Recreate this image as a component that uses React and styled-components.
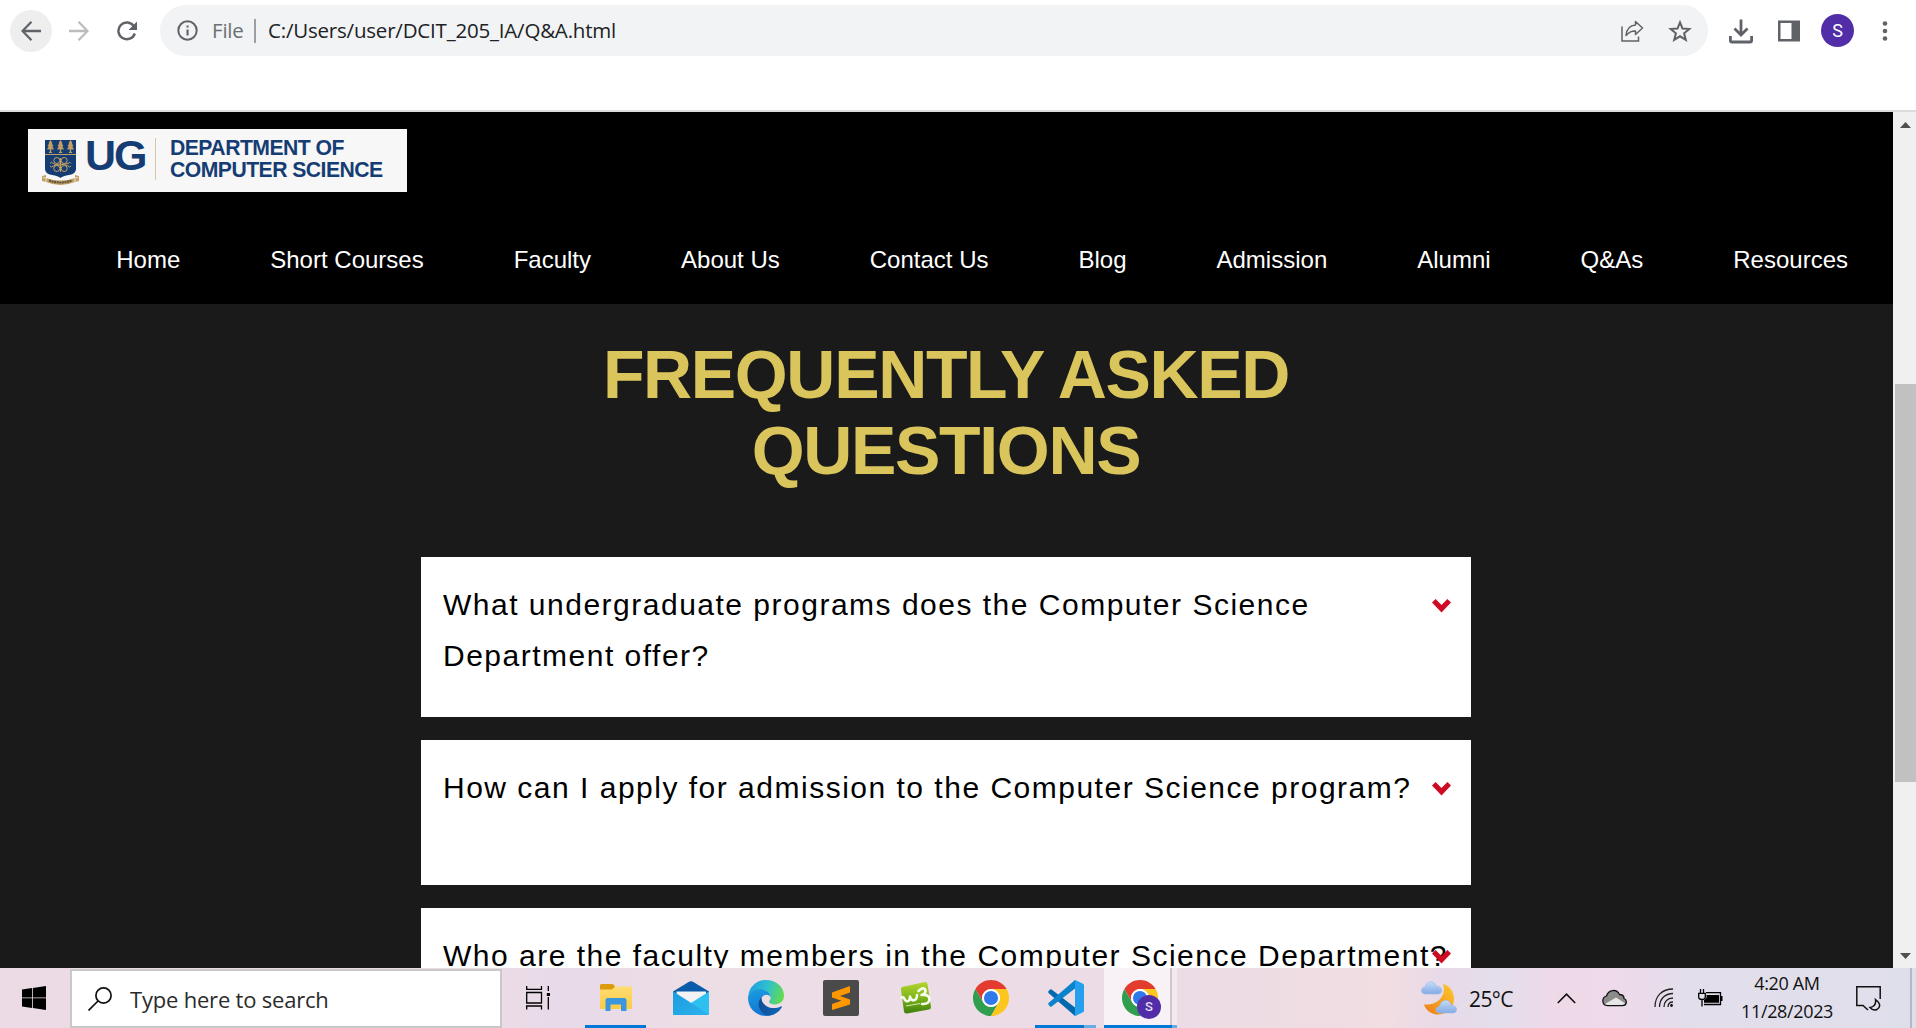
import React from 'react';
import styled, { createGlobalStyle } from 'styled-components';

const Global = createGlobalStyle`
  * { box-sizing: border-box; }
  html, body { margin: 0; padding: 0; overflow: hidden; background: #fff; }
  svg { display: block; flex: none; }
`;

const ui = `"Open Sans", "Noto Sans", sans-serif`;
const arial = `"Liberation Sans", Arial, sans-serif`;

const Screen = styled.div`
  width: 1916px;
  height: 1028px;
  display: flex;
  flex-direction: column;
  overflow: hidden;
`;

/* Browser toolbar */
const Toolbar = styled.header`
  height: 112px;
  flex: none;
  display: flex;
  align-items: flex-start;
  padding: 5px 0 0 10px;
  background: #fff;
  border-bottom: 2px solid #dcdcdc;
`;
const NavButton = styled.div`
  width: 42px;
  height: 42px;
  flex: none;
  margin: 5px ${p => p.$gap}px 0 0;
  border-radius: 50%;
  display: flex;
  align-items: center;
  justify-content: center;
  background: ${p => (p.$active ? '#eeeeee' : 'transparent')};
`;
const AddressBar = styled.div`
  width: 1548px;
  height: 51px;
  flex: none;
  border-radius: 26px;
  background: #f1f3f4;
  display: flex;
  align-items: center;
  padding: 0 16px 0 17px;
  margin-right: 20px;
`;
const Scheme = styled.span`
  font: 20.5px/28px ${ui};
  letter-spacing: -0.2px;
  color: #6b6f73;
  width: 42px;
  margin: -2px 0 0 14px;
  white-space: nowrap;
`;
const Separator = styled.span`
  width: 2px;
  height: 24px;
  background: #9b9fa3;
`;
const Address = styled.span`
  flex: 1;
  margin: -2px 0 0 12px;
  font: 20.5px/28px ${ui};
  letter-spacing: -0.2px;
  color: #202124;
  white-space: nowrap;
`;
const BarIcons = styled.div`
  display: flex;
  align-items: center;
  gap: 24px;
`;
const Tools = styled.div`
  height: 51px;
  display: flex;
  align-items: center;
`;
const Slot = styled.div`
  width: ${p => p.$w}px;
  flex: none;
  display: flex;
  justify-content: center;
`;
const Avatar = styled.div`
  width: 33px;
  height: 33px;
  flex: none;
  border-radius: 50%;
  background: #512da8;
  color: #fff;
  font: 18px/33px Roboto, sans-serif;
  text-align: center;
`;

/* Page */
const Viewport = styled.div`
  height: 856px;
  flex: none;
  display: flex;
  overflow: hidden;
`;
const Page = styled.div`
  width: 1893px;
  height: 856px;
  overflow: hidden;
  background: #1a1a1a;
`;
const SiteHeader = styled.div`
  height: 192px;
  background: #000;
  padding: 17px 0 0 28px;
`;
const Logo = styled.div`
  width: 379px;
  height: 63px;
  background: #f7f7f7;
  display: flex;
  align-items: flex-start;
  padding: 9px 0 0 13px;
  color: #163d73;
  font-family: ${arial};
  font-weight: bold;
`;
const LogoMark = styled.span`
  font-size: 43px;
  line-height: 46px;
  letter-spacing: -2px;
  width: 70px;
  margin: -6px 0 0 4px;
`;
const LogoRule = styled.span`
  width: 1px;
  height: 42px;
  background: #d9c6a5;
`;
const LogoName = styled.div`
  margin: -1px 0 0 14px;
  font-size: 21.2px;
  line-height: 22px;
  letter-spacing: -0.54px;
  white-space: nowrap;
`;
const Menu = styled.nav`
  display: flex;
  justify-content: flex-end;
  gap: 90px;
  padding: 54px 45px 0 0;
`;
const MenuLink = styled.a`
  color: #fff;
  font: 24px/28px ${arial};
  white-space: nowrap;
`;
const Faq = styled.main`
  width: 1050px;
  margin-left: 421px;
  padding-top: 32px;
  display: flex;
  flex-direction: column;
`;
const Title = styled.h1`
  width: 750px;
  height: 221px;
  margin: 0 auto;
  color: #d9c55c;
  font: bold 68px/76px ${arial};
  letter-spacing: -1.35px;
  text-align: center;
`;
const Card = styled.section`
  position: relative;
  height: ${p => p.$h}px;
  flex: none;
  margin-bottom: 23px;
  padding: 22px 20px 0 22px;
  background: #fff;
`;
const Question = styled.p`
  margin: 0;
  color: #000;
  font: 30px/51px ${arial};
  letter-spacing: 1.5px;
`;
const Toggle = styled.svg`
  position: absolute;
  right: 20px;
  top: 42px;
`;

const Scrollbar = styled.div`
  width: 23px;
  height: 856px;
  background: #f0f0f0;
  display: flex;
  flex-direction: column;
  align-items: center;
  padding: 10px 0 9px 2px;
`;
const Thumb = styled.div`
  width: 21px;
  height: 398px;
  flex: none;
  margin: 256px 0 auto;
  background: #c1c1c1;
`;

/* Taskbar */
const Taskbar = styled.footer`
  height: 60px;
  flex: none;
  display: flex;
  color: #111;
  background: linear-gradient(90deg, #ecdbe4 0, #ecdce5 480px, #e7dae9 570px, #eddde5 680px, #ecdce6 1000px,
    #ecdce5 1180px, #f1dde2 1390px, #e8dae8 1440px, #e4deeb 1500px, #efd9e9 1560px, #eddaea 1620px, #e3deeb 1690px, #dfdfeb 1916px);
`;
const Start = styled.div`
  width: 70px;
  flex: none;
  padding: 18px 0 0 22px;
`;
const Search = styled.div`
  width: 432px;
  height: 59px;
  flex: none;
  margin-top: 1px;
  display: flex;
  align-items: center;
  background: #fff;
  border: 2px solid #c8c8c8;
  padding-left: 16px;
  gap: 18px;
  color: #2b2b2b;
  font: 22px/30px ${ui};
  letter-spacing: -0.2px;
`;
const TaskView = styled.div`
  width: 76px;
  flex: none;
  padding: 18px 0 0 24px;
`;
const AppButton = styled.div`
  position: relative;
  width: 75px;
  height: 60px;
  flex: none;
  display: flex;
  align-items: center;
  justify-content: center;
  ${p => p.$active && `background: linear-gradient(90deg, #f8f1f5 66px, #d3c5ce 66px, #d3c5ce 68px, #f4e9ef 68px);
    width: 73px; margin-left: 1px; padding-right: 1px;`}
`;
const Underline = styled.span`
  position: absolute;
  left: ${p => (p.$full ? 0 : 7)}px;
  bottom: 0;
  height: 3px;
  width: ${p => (p.$full ? 73 : 61)}px;
  background: linear-gradient(90deg, #0078d7 ${p => p.$split}px, #66ade5 ${p => p.$split}px);
`;
const Badge = styled.span`
  position: absolute;
  left: 33px;
  top: 27px;
  width: 24px;
  height: 24px;
  border-radius: 50%;
  background: #512da8;
  color: #e6dcf5;
  font: 500 13px/24px Roboto, sans-serif;
  text-align: center;
`;
const Tray = styled.div`
  flex: 1;
  display: flex;
  align-items: center;
  padding-left: 244px;
`;
const Temp = styled.span`
  width: 84px;
  flex: none;
  margin-left: 12px;
  padding-top: 2px;
  font: 21px/28px ${ui};
  letter-spacing: -0.6px;
`;
const Clock = styled.div`
  width: 92px;
  flex: none;
  margin-bottom: 2px;
  text-align: center;
  font: 18px/28px ${ui};
  letter-spacing: -0.35px;
  white-space: nowrap;
`;
const ShowDesktop = styled.span`
  width: 2px;
  height: 60px;
  margin: 0 4px 0 auto;
  background: #b9b6c6;
`;

const Tree = ({ x }) => (
  <path transform={`translate(${x} 3)`} fill="#c3a062" d="M0-1 2 2 1.3 2.4 3 5 1.8 5.3 3.5 8.5 .7 8.3V11H1.6V12H-1.6V11H-.7V8.3L-3.5 8.5-1.8 5.3-3 5-1.3 2.4-2 2Z" />
);

const Crest = () => (
  <svg width="40" height="47" viewBox="0 0 40 47">
    <path fill="#163d73" d="M4 2H35V31Q35 36 28 37 22 38 19.500 40 17 38 11 37 4 36 4 31Z" />
    <Tree x={9.5} /><Tree x={19.5} /><Tree x={29.5} />
    <path stroke="#c3a062" strokeWidth="1" d="M4 16.500H35" />
    <g fill="none" stroke="#c3a062" strokeWidth="1">
      <circle cx="15.800" cy="22.500" r="3" /><circle cx="23.200" cy="22.500" r="3" />
      <circle cx="15.800" cy="30.500" r="3" /><circle cx="23.200" cy="30.500" r="3" />
      <path d="M9 25.500Q10 23 12.500 25.500T19.500 27 27 25.500Q29 23 30 25.500M9 28Q10 30 12.500 28T19.500 26 27 28Q29 30 30 28M19.500 20V34" />
    </g>
    <path fill="#c3a062" d="M1 38 5 37V40Q19.500 45 34 40V37L38 38V43L34 44Q19.500 50 5 44L1 43Z" />
    <path fill="none" stroke="#f7f7f7" strokeWidth=".8" d="M5 39V44M34 39V44M2 40 4 39.500M35 39.500 37 40" />
    <path fill="none" stroke="#5c5440" strokeWidth="2.200" strokeDasharray="2 .6" d="M8 42.500Q19.500 46.500 31 42.500" />
  </svg>
);

const ChromeLogo = () => (
  <svg width="36" height="36" viewBox="0 0 48 48">
    <path fill="#e33b2e" d="M24 12H44.780A24 24 0 0 0 3.220 12L13.610 30A12 12 0 0 1 24 12Z" />
    <path fill="#2f9e4f" d="M13.610 30 3.220 12A24 24 0 0 0 24 48L34.390 30A12 12 0 0 1 13.610 30Z" />
    <path fill="#fcc61d" d="M34.390 30 24 48A24 24 0 0 0 44.780 12H24A12 12 0 0 1 34.390 30Z" />
    <circle cx="24" cy="24" r="12" fill="#fff" />
    <circle cx="24" cy="24" r="9.400" fill="#3079ea" />
  </svg>
);

const Explorer = () => (
  <svg width="32" height="28" viewBox="0 0 32 28">
    <path fill="#dc9b0c" d="M0 1.500Q0 0 1.500 0H12Q13 0 13.700.8L15.500 3V8H0Z" />
    <linearGradient id="fold" x1="0" y1="0" x2="0" y2="1"><stop stopColor="#ffdc72" /><stop offset="1" stopColor="#fcca45" /></linearGradient>
    <path fill="url(#fold)" d="M0 5.500H12L15 2.500H30.500Q32 2.500 32 4V23.500Q32 25 30.500 25H1.500Q0 25 0 23.500Z" />
    <path fill="#3a96dd" d="M5.500 27V16Q5.500 14 7.500 14H24Q26.500 14 26.500 16V27H21V20.500H10.500V27Z" />
  </svg>
);

const Mail = () => (
  <svg width="36" height="34" viewBox="0 0 36 34">
    <linearGradient id="mailg" x1="0" y1="0" x2="1" y2="1"><stop stopColor="#1b9be0" /><stop offset="1" stopColor="#2cb3ec" /></linearGradient>
    <path fill="#0b5ca8" d="M0 10.500 16.500.5Q18 0 19.500.5L36 10.500V14H0Z" />
    <path fill="#f3f3f3" d="M3.500 10.500H33V22H3.500Z" />
    <path fill="#2fc0f2" d="M0 10.500 18 22 36 10.500V32.500Q36 34 34.500 34H1.500Q0 34 0 32.500Z" />
    <path fill="url(#mailg)" d="M0 10.500 36 33.500 34.500 34H1.500Q0 34 0 32.500Z" />
  </svg>
);

const Edge = () => (
  <svg width="36" height="36" viewBox="0 0 36 36">
    <defs>
      <linearGradient id="e1" x1="0" y1=".3" x2="1" y2=".5"><stop stopColor="#1f9fe0" /><stop offset=".5" stopColor="#2fbfd0" /><stop offset="1" stopColor="#62dc50" /></linearGradient>
      <linearGradient id="e2" x1=".2" y1="0" x2=".5" y2="1"><stop stopColor="#1b9be2" /><stop offset="1" stopColor="#1173ce" /></linearGradient>
      <linearGradient id="e3" x1="0" y1="0" x2="1" y2=".4"><stop stopColor="#0d4a93" /><stop offset="1" stopColor="#1263b4" /></linearGradient>
    </defs>
    <path fill="url(#e1)" d="M.3 15.500C1.500 6.500 9 0 18 0 28.500 0 36 7.500 36 15.500 36 21 32 24.500 27 24.500 23 24.500 21 23 21 21.800 21 21 22.600 20.200 22.600 17.500 22.600 13.500 18.500 10 13 10 7 10 2 12.500.3 15.500Z" />
    <path fill="url(#e2)" d="M.1 16.500C1.800 12 6.500 9.300 12 9.300 18 9.300 22.500 13 22.600 17 20.500 13.800 16.500 14.200 14 17 10.500 21 13 31 24.500 33.500 27.500 34 25 35 18 36 8 36-.8 28 .1 16.500Z" />
    <path fill="url(#e3)" d="M13.800 17.200C10 20 9.500 26 13 31 15.500 34.500 19.500 36 22 35.600 27.500 34.500 31.500 31.500 33.800 27.300 34.200 26.500 33.500 26 32.700 26.500 28 29 21 28.500 17.500 25.500 14.500 23 13 19.800 13.800 17.200Z" />
  </svg>
);

const Sublime = () => (
  <svg width="36" height="36" viewBox="0 0 36 36">
    <rect width="36" height="36" rx="2" fill="#4a4a4a" />
    <path fill="#ff9800" d="M9 12.500 27 6V12.500L17 16 27 19.500V24.500L9 30V24L18.500 20.800 9 17.500Z" />
  </svg>
);

const W3 = () => (
  <svg width="32" height="34" viewBox="0 0 32 34">
    <linearGradient id="w3g" x1="0" y1="0" x2="0" y2="1"><stop stopColor="#b6d531" /><stop offset=".5" stopColor="#7cb518" /><stop offset="1" stopColor="#3f7f10" /></linearGradient>
    <path fill="url(#w3g)" d="M2 6 25 1Q27 .8 27.500 3L31 26Q31 28 29 28.500L7 32.500Q4.500 33 4 30.500L1 9Q.7 6.500 2 6Z" />
    <path fill="none" stroke="#f7faee" strokeWidth="2.600" strokeLinecap="round" strokeLinejoin="round" d="M1.500 17Q3 15 4 17C6 22 10 21 10 15.500 11.500 21.500 17 20 17 14M18.500 10Q24 5 25.500 9.500 26 13 21.500 14 29 13 29.500 18 29 23.500 22 23" />
    <path stroke="#d4e8a9" strokeWidth="1" d="M6 25 20 22.500" />
  </svg>
);

const Code = () => (
  <svg width="36" height="36" viewBox="0 0 36 36">
    <path fill="#0069ad" d="M.5 11.300 2 9.600Q2.800 9 3.600 9.600L27 27.500V36L.5 13Q0 12.200.5 11.300Z" />
    <path fill="#0a82cc" d="M.5 24.700 2 26.400Q2.800 27 3.600 26.400L27 8.500V0L.5 23Q0 23.800.5 24.700Z" />
    <path fill="#24a0ee" d="M26 .2 27.200.1 35 3.700Q36 4.200 36 5.200V30.800Q36 31.800 35 32.300L27.200 35.900 26 35.600Q27 35 27 33.500V2.500Q27 1 26 .2Z" />
  </svg>
);

const Weather = () => (
  <svg width="36" height="34" viewBox="0 0 36 34">
    <defs>
      <linearGradient id="moon" x1="1" y1="0" x2="0" y2="1"><stop stopColor="#ffcb30" /><stop offset="1" stopColor="#ee7a12" /></linearGradient>
      <linearGradient id="cloud" x1="0" y1="0" x2="0" y2="1"><stop stopColor="#c5dcfb" /><stop offset="1" stopColor="#83a9e4" /></linearGradient>
    </defs>
    <path fill="url(#moon)" d="M22 3C30 5 34.500 13 32.500 22 30 31 21 35 13 33 8 31.500 4.500 28 3 23.500 16 25 26 15 22 3Z" />
    <path fill="url(#cloud)" stroke="#9bb9e8" strokeWidth=".6" d="M4.500 13C-1 13-1 6.500 4 6 5-.5 14-1 15.500 5.500 22 5 22.500 13 17 13Z" />
    <path fill="url(#cloud)" stroke="#9bb9e8" strokeWidth=".6" d="M19 32C13.500 32 13.500 26 18.500 25.500 20 17.500 29 17.500 30.500 24.500 37 24 37 32 32 32Z" />
  </svg>
);

const G = '#5f6368';
const links = ['Home', 'Short Courses', 'Faculty', 'About Us', 'Contact Us', 'Blog', 'Admission', 'Alumni', 'Q&As', 'Resources'];
const questions = [
  ['What undergraduate programs does the Computer Science Department offer?', 160],
  ['How can I apply for admission to the Computer Science program?', 145],
  ['Who are the faculty members in the Computer Science Department?', 145],
];

export default function App() {
  return (
    <Screen>
      <Global />
      <Toolbar>
        <NavButton $active $gap={6}>
          <svg width="20" height="20" viewBox="0 0 20 20" fill="none" stroke={G} strokeWidth="2.300"><path d="M20 10H2M10.500.8 1.500 10 10.500 19.200" /></svg>
        </NavButton>
        <NavButton $gap={6}>
          <svg width="20" height="20" viewBox="0 0 20 20" fill="none" stroke="#babcbe" strokeWidth="2.300"><path d="M0 10H18M9.500.8 18.500 10 9.500 19.200" /></svg>
        </NavButton>
        <NavButton $gap={12}>
          <svg width="22" height="20" viewBox="0 0 22 20"><path fill="none" stroke={G} strokeWidth="2.400" d="M17.800 5.200A8.400 8.400 0 1 0 18.800 12.500" /><path fill={G} d="M21 .5V9H12.500Z" /></svg>
        </NavButton>
        <AddressBar>
          <svg width="21" height="21" viewBox="0 0 21 21"><circle cx="10.500" cy="10.500" r="9.200" fill="none" stroke={G} strokeWidth="2" /><path fill={G} d="M9.500 9.500H11.600V15.500H9.500ZM9.500 5.500H11.600V7.600H9.500Z" /></svg>
          <Scheme>File</Scheme>
          <Separator />
          <Address>C:/Users/user/DCIT_205_IA/Q&amp;A.html</Address>
          <BarIcons>
            <svg width="24" height="24" viewBox="0 0 24 24" fill="none" stroke={G} strokeWidth="1.500"><path d="M2 7.500V22H18.500V17.500" /><path strokeLinejoin="round" d="M15.500 2.500 22.500 9 15.500 15.500V12C11 11.800 8.500 13.500 6 16.500 6.500 11 9.500 6.500 15.500 6Z" /></svg>
            <svg width="24" height="24" viewBox="0 0 24 24" fill="none" stroke={G} strokeWidth="2"><path d="M12 3.300 14.500 9.500 21.300 10 16.100 14.300 17.800 20.900 12 17.300 6.200 20.900 7.900 14.300 2.700 10 9.500 9.500Z" /></svg>
          </BarIcons>
        </AddressBar>
        <Tools>
          <Slot $w={26}>
            <svg width="26" height="26" viewBox="0 0 26 26" fill="none" stroke={G} strokeWidth="2.800"><path d="M13 1.500V16M6.500 10.500 13 17 19.500 10.500M2.400 18V22.500Q2.400 24 4 24H22Q23.600 24 23.600 22.500V18" /></svg>
          </Slot>
          <Slot $w={70}>
            <svg width="22" height="22" viewBox="0 0 22 22"><path fill={G} fillRule="evenodd" d="M0 .5H22V21.500H0ZM2.500 3V19H13.500V3Z" /></svg>
          </Slot>
          <Slot $w={27}><Avatar>S</Avatar></Slot>
          <Slot $w={68}>
            <svg width="6" height="22" viewBox="0 0 6 22" fill={G}><circle cx="3" cy="3.500" r="2.300" /><circle cx="3" cy="11" r="2.300" /><circle cx="3" cy="18.500" r="2.300" /></svg>
          </Slot>
        </Tools>
      </Toolbar>

      <Viewport>
        <Page>
          <SiteHeader>
            <Logo>
              <Crest />
              <LogoMark>UG</LogoMark>
              <LogoRule />
              <LogoName>DEPARTMENT OF<br />COMPUTER SCIENCE</LogoName>
            </Logo>
            <Menu>{links.map(l => <MenuLink key={l}>{l}</MenuLink>)}</Menu>
          </SiteHeader>
          <Faq>
            <Title>FREQUENTLY ASKED QUESTIONS</Title>
            {questions.map(([q, h]) => (
              <Card key={q} $h={h}>
                <Question>{q}</Question>
                <Toggle width="19" height="14" viewBox="0 0 19 14"><path fill="#ce0a24" d="M0 3.600 3.600 0 9.500 6 15.400 0 19 3.600 9.500 13.600Z" /></Toggle>
              </Card>
            ))}
          </Faq>
        </Page>
        <Scrollbar>
          <svg width="11" height="6" viewBox="0 0 11 6"><path fill="#505050" d="M5.500 0 11 6H0Z" /></svg>
          <Thumb />
          <svg width="11" height="6" viewBox="0 0 11 6"><path fill="#505050" d="M5.500 6 11 0H0Z" /></svg>
        </Scrollbar>
      </Viewport>

      <Taskbar>
        <Start>
          <svg width="24" height="24" viewBox="0 0 24 24"><path d="M0 3.400 10 2V11.500H0ZM10.800 1.900 24 0V11.500H10.800ZM0 12.300H10V22L0 20.600ZM10.800 12.300H24V24L10.800 22.100Z" /></svg>
        </Start>
        <Search>
          <svg width="24" height="24" viewBox="0 0 24 24" fill="none" stroke="#111" strokeWidth="1.700"><circle cx="15.500" cy="8.500" r="7.600" /><path d="M10 14 .5 23.500" /></svg>
          Type here to search
        </Search>
        <TaskView>
          <svg width="25" height="24" viewBox="0 0 25 24" fill="none" stroke="#000" strokeWidth="1.300"><path d="M.7 0V3.300H15.500V0M.7 6.500H15.500V17H.7ZM.7 23.500V20H15.500V23.500M22.300 0V5M22.300 11V23.500" /><path fill="#000" stroke="none" d="M20.800 7H24V10H20.800Z" /></svg>
        </TaskView>
        <AppButton><Explorer /><Underline $split={61} /></AppButton>
        <AppButton><Mail /></AppButton>
        <AppButton><Edge /></AppButton>
        <AppButton><Sublime /></AppButton>
        <AppButton><W3 /></AppButton>
        <AppButton><ChromeLogo /></AppButton>
        <AppButton><Code /><Underline $split={49} /></AppButton>
        <AppButton $active><ChromeLogo /><Badge>S</Badge><Underline $full $split={68} /></AppButton>
        <Tray>
          <Weather />
          <Temp>25°C</Temp>
          <Slot $w={26}><svg width="19" height="11" viewBox="0 0 19 11" fill="none" stroke="#111" strokeWidth="1.600"><path d="M.8 10 9.500 1.200 18.200 10" /></svg></Slot>
          <Slot $w={70}>
            <svg width="25" height="18" viewBox="0 0 25 18"><path fill="#8b8b8b" d="M5 16C0 15.500-.5 8.500 4.500 7 6.500 1 14 0 17 5.500 21 5.500 22 8 22 9.500 25.500 11 24.500 16 21 16Z" /><path fill="#e6e6e6" d="M3 15 14 8.500 23.500 14.500 21 16.500H5Z" /><path fill="none" stroke="#111" strokeWidth="1.300" d="M5.500 16.700C-.5 16.500-.5 8.500 4.500 7 6.500.5 14.500-.5 17.500 5.500 21 5.500 22 8 22 9.500 25.500 11 25 16.700 20.500 16.700Z" /></svg>
          </Slot>
          <Slot $w={30}>
            <svg width="20" height="20" viewBox="0 0 20 20" fill="none" stroke="#222" strokeWidth="1.300"><path d="M1 19C1 8 8 1 19 1M5.500 19C5.500 11 11 5.500 19 5.500M10 19C10 13.500 13.500 10 19 10" /><path d="M14 19C14 16 16 14 19 14" /><circle cx="17.500" cy="17.500" r="1.400" fill="#111" stroke="none" /></svg>
          </Slot>
          <Slot $w={62}>
            <svg width="25" height="18" viewBox="0 0 25 18"><path fill="none" stroke="#000" strokeWidth="1.300" d="M8 3.700H22.500V15.500H6" /><path d="M8.500 6H21V13.800H6V11L8.500 9ZM23 7H24.500V12H23Z" /><path fill="none" stroke="#000" strokeWidth="1.300" d="M2.500 0V4M5.500 0V4M.7 4.300H7.300V8Q7.300 10.500 4 10.500T.7 8ZM4 10.500V17.500" /></svg>
          </Slot>
          <Clock>4:20 AM<br />11/28/2023</Clock>
          <Slot $w={71}>
            <svg width="25" height="25" viewBox="0 0 25 25" fill="none" stroke="#111" strokeWidth="1.500"><path d="M12 24 7 19.500H.8V.8H24.200V13" /><path d="M19.500 13.500Q20.500 20.500 14 21.500 17 25 21 23.500 27 19.500 19.500 13.500Z" /></svg>
          </Slot>
          <ShowDesktop />
        </Tray>
      </Taskbar>
    </Screen>
  );
}
